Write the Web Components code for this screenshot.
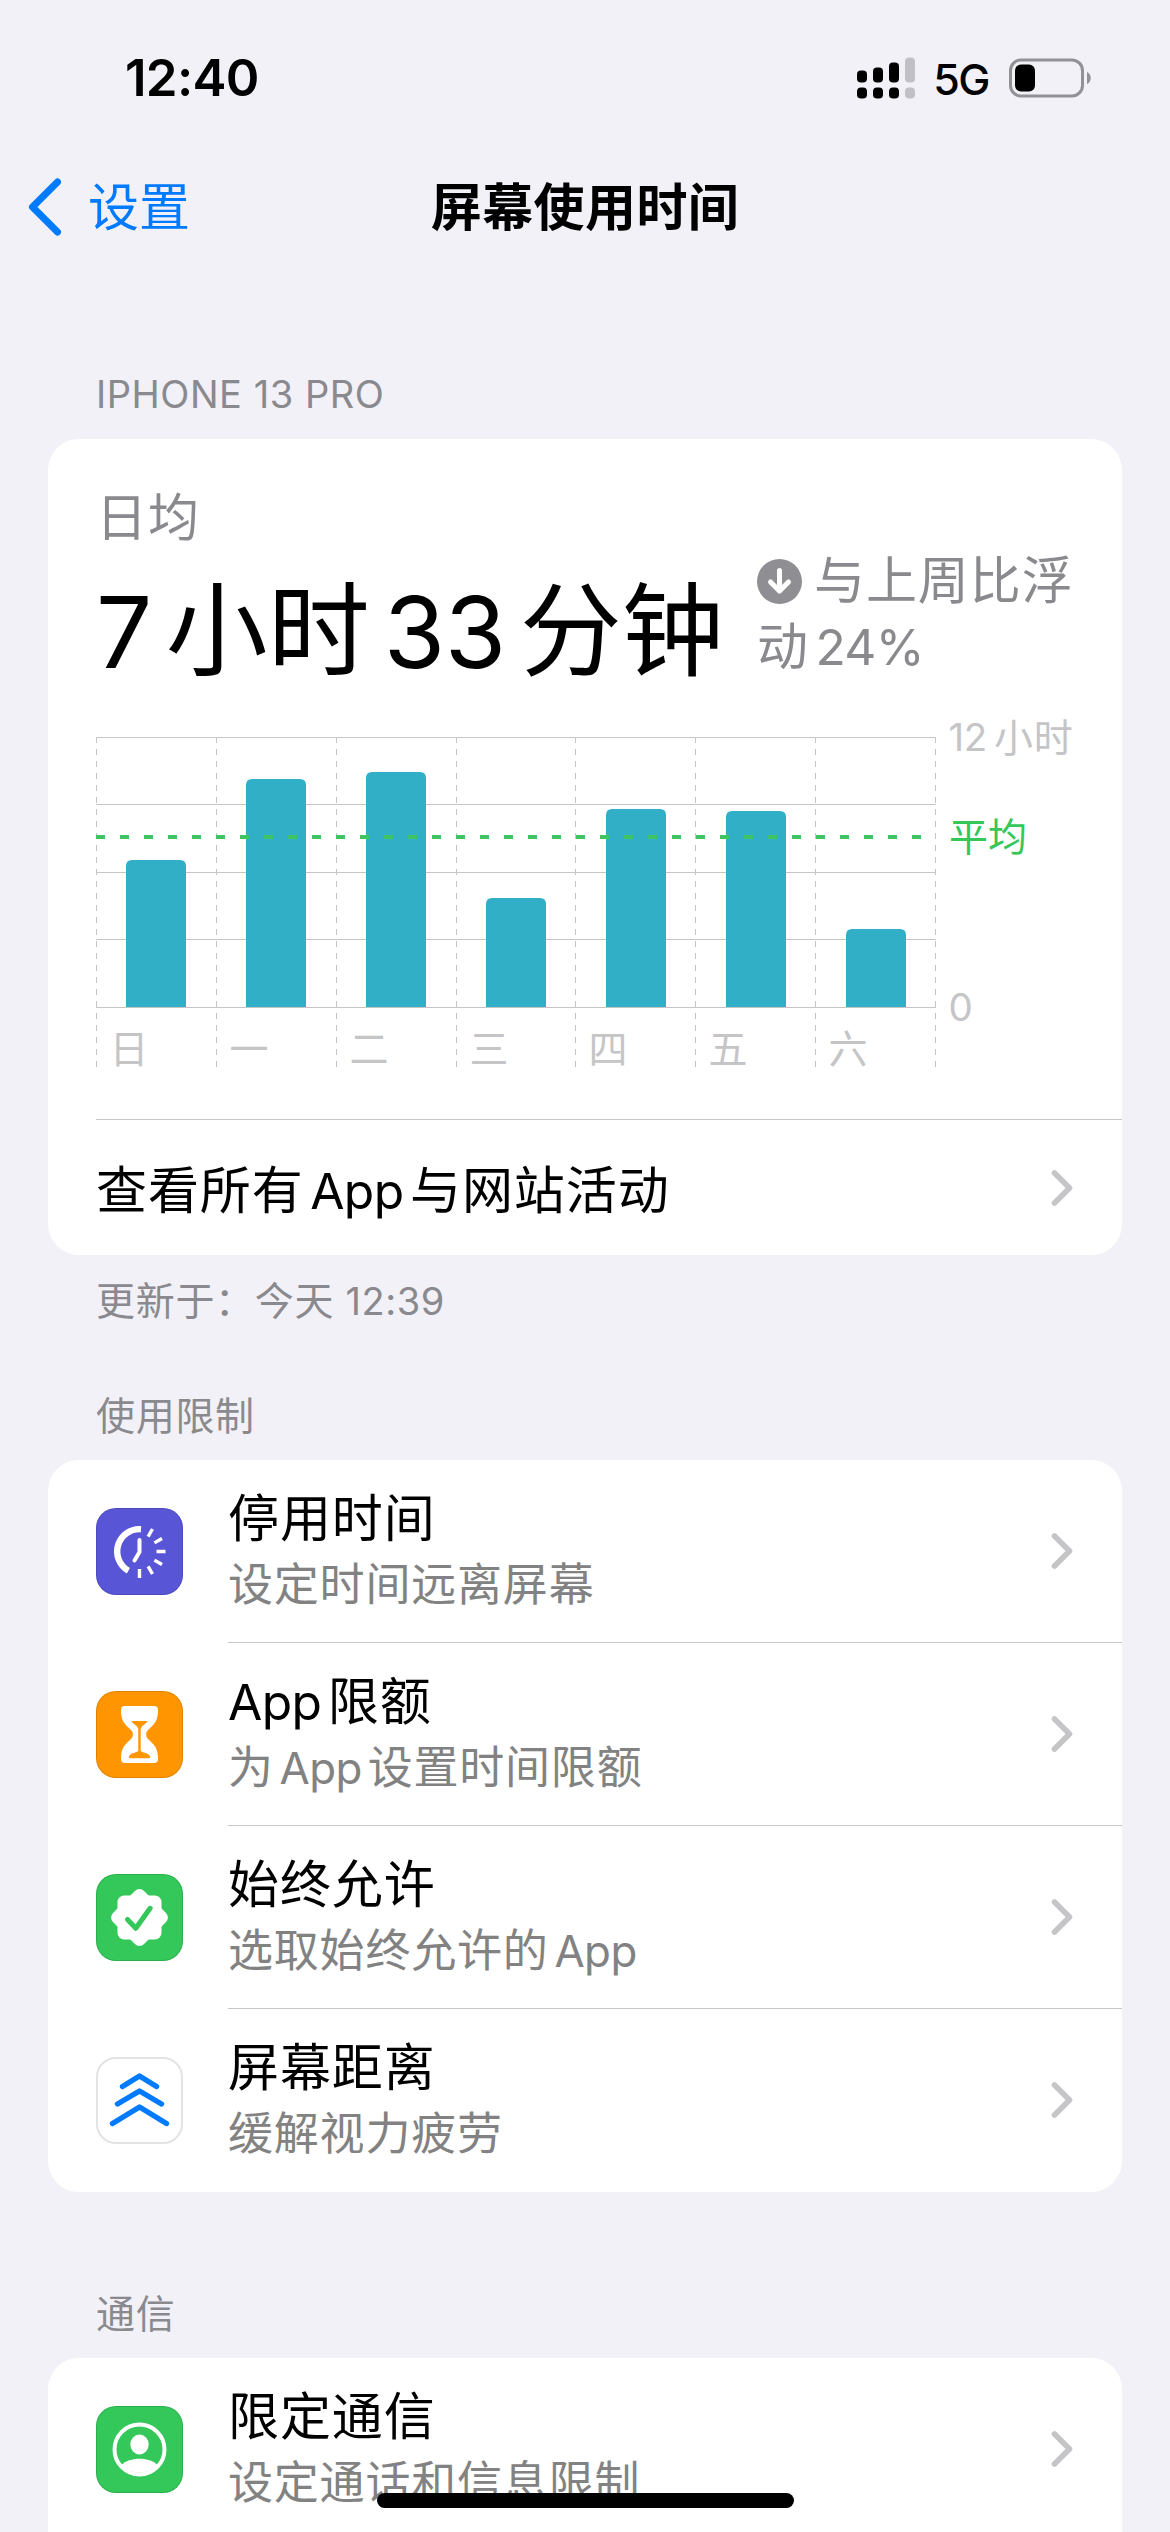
<!DOCTYPE html>
<html lang="zh-CN">
<head>
<meta charset="utf-8">
<title>屏幕使用时间</title>
<style>
html,body{margin:0;padding:0}
body{width:1170px;height:2532px;overflow:hidden;background:#f2f1f8;font-family:Inter,"Noto Sans CJK SC",sans-serif;color:#000}
</style>
</head>
<body>
<screen-time-page></screen-time-page>
<script>
const define = (name, html, setup) => {
  const t = document.createElement('template');
  t.innerHTML = html;
  customElements.define(name, class extends HTMLElement {
    connectedCallback() {
      if (this.shadowRoot) return;
      this.attachShadow({mode: 'open'}).append(t.content.cloneNode(true));
      if (setup) setup(this, this.shadowRoot);
    }
  });
};

/* Text that mixes Chinese and Latin runs, with a thin gap where they meet. */
define('mixed-text', `<style>
:host{display:block;white-space:nowrap;text-autospace:no-autospace;letter-spacing:var(--cjk,.018em)}
.l{font-size:.975em;letter-spacing:var(--latin,-.012em)}
.b{margin-left:var(--gap,.13em)}.a{margin-right:var(--gap,.13em)}
</style><span id="t"></span>`, (el, root) => {
  const box = root.getElementById('t');
  const runs = el.getAttribute('text').match(/[\x20-\x7e]+|[^\x20-\x7e]+/g);
  runs.forEach((r, i) => {
    const s = document.createElement('span');
    s.textContent = r;
    if (/[\x21-\x7e]/.test(r)) {
      s.className = 'l' + (i && r[0] !== ' ' ? ' b' : '') + (i < runs.length - 1 ? ' a' : '');
    }
    box.append(s);
  });
});

define('status-bar', `<style>
:host{display:flex;height:155px;align-items:center;padding:0 78px 0 125px;box-sizing:border-box}
.time{font-size:51px;font-weight:600;line-height:60px;letter-spacing:-.7px;flex:1}
.net{font-size:43px;font-weight:500;line-height:60px;letter-spacing:-1.500px;margin:2px 20px 0 18px}
svg{display:block}
</style>
<span class="time">12:40</span>
<svg width="58" height="42" viewBox="0 0 58 42"><g><rect y="13.500" width="10" height="12" rx="4"/><rect x="16" y="10.500" width="10" height="15" rx="4"/><rect x="32" y="5.500" width="10" height="20" rx="4"/><rect y="30.500" width="10" height="11" rx="4"/><rect x="16" y="30.500" width="10" height="11" rx="4"/><rect x="32" y="30.500" width="10" height="11" rx="4"/></g><g fill="#c1c0c6"><rect x="48" y=".5" width="10" height="25" rx="4"/><rect x="48" y="30.500" width="10" height="11" rx="4"/></g></svg>
<span class="net">5G</span>
<svg width="83" height="40" viewBox="0 0 83 40"><rect x="1.500" y="2" width="72" height="36" rx="10.500" fill="none" stroke="#929196" stroke-width="3"/><rect x="6" y="6.500" width="20" height="27" rx="6"/><path d="M78 14c5 2 5 10 0 12z" fill="#929196"/></svg>`);

define('nav-bar', `<style>
:host{display:grid;grid-template-columns:1fr auto 1fr;align-items:center;height:104px;padding:0 28px;font-size:51px;line-height:70px}
.back{display:flex;align-items:center;gap:26px;color:#007aff;--cjk:0}
.title{font-weight:600;--cjk:.008em}
mixed-text{padding-top:2px}
svg{display:block}
</style>
<div class="back"><svg width="34" height="58" viewBox="0 0 34 58"><path d="M29.500 4 4.500 29l25 25" fill="none" stroke="currentColor" stroke-width="7" stroke-linecap="round" stroke-linejoin="round"/></svg><mixed-text text="设置"></mixed-text></div>
<mixed-text class="title" text="屏幕使用时间"></mixed-text><span></span>`);

define('section-note', `<style>:host{display:block;padding:0 96px;font-size:39px;line-height:50px;color:#8a8a8e;--latin:.014em}</style><slot></slot>`);

define('group-card', `<style>:host{display:block;margin:0 48px;background:#fff;border-radius:31px;overflow:hidden}:host([continues]){border-radius:31px 31px 0 0}</style><slot></slot>`);

define('row-chevron', `<style>:host{display:block;flex:none}svg{display:block}</style>
<svg width="22" height="38" viewBox="0 0 22 38"><path d="M3.500 4 18.500 19l-15 15" fill="none" stroke="#c5c5c7" stroke-width="5.600" stroke-linecap="round" stroke-linejoin="round"/></svg>`);

const icons = {
  downtime: ['#5856d6', `<g fill="none" stroke="#fff"><path d="M45 21.200A22.300 22.300 0 0 0 32.400 62.800" stroke-width="6.400"/><path d="M43.500 32v12l-5 8.500" stroke-width="4" stroke-linecap="round" stroke-linejoin="round"/><path d="M60.500 43.500h9M58.400 52.100l7.600 4.400M52.100 58.400l4.400 7.600M43.500 61v9M58.400 34.900l7.600-4.400M52.100 28.600l4.400-7.600" stroke-width="3.400"/></g>`],
  limits: ['#ff9500', `<path fill="#fff" d="M29 15h29a4 4 0 0 1 4 4c0 12-4 14-10 20q-4 4 0 9c6 6 10 8 10 20a4 4 0 0 1-4 4H29a4 4 0 0 1-4-4c0-12 4-14 10-20q4-5 0-9c-6-6-10-8-10-20a4 4 0 0 1 4-4z"/><path fill="#ff9500" d="M35.500 30h16c-1 3-6 4-6.800 8v22c2 2 9 2 9.500 6q0 1.300-1.500 1.300H34.300q-1.500 0-1.500-1.300c.5-4 7.500-4 9.500-6V38c-.8-4-5.800-5-6.800-8z"/>`],
  allowed: ['#34c759', `<g fill="#fff"><rect x="21.500" y="21.500" width="44" height="44" rx="6.500"/><rect x="21.500" y="21.500" width="44" height="44" rx="6.500" transform="rotate(45 43.500 43.500)"/></g><path d="M31.500 45.500l8.300 8.800 14.300-20" fill="none" stroke="#34c759" stroke-width="5" stroke-linecap="round" stroke-linejoin="round"/>`],
  distance: ['#fff', `<path d="M26.500 29.500l17-10.500 17 10.500M21.500 47l22-13 22 13M16.500 66.500l27-16.500 27 16.500" fill="none" stroke="#007aff" stroke-width="5.400" stroke-linecap="round" stroke-linejoin="round"/>`],
  contact: ['#34c759', `<circle cx="43.500" cy="43.500" r="25" fill="none" stroke="#fff" stroke-width="4"/><ellipse cx="43.500" cy="38.500" rx="9.200" ry="10" fill="#fff"/><path fill="#fff" d="M25.500 59C33 50.500 54 50.500 61.500 59A25 25 0 0 1 25.500 59z"/>`]
};

define('app-icon', `<style>
:host{display:block;flex:none;width:87px;height:87px}svg{display:block}
</style><svg width="87" height="87" viewBox="0 0 87 87"></svg>`, (el, root) => {
  const [bg, art] = icons[el.getAttribute('name')];
  const edge = bg === '#fff' ? 'stroke="#e3e3e5" stroke-width="2"' : 'stroke="#000" stroke-opacity=".12"';
  const o = bg === '#fff' ? 1 : .5;
  root.querySelector('svg').innerHTML = `<rect width="87" height="87" rx="20" fill="${bg}"/>${art}<rect x="${o}" y="${o}" width="${87 - 2 * o}" height="${87 - 2 * o}" rx="${20 - o}" fill="none" ${edge}/>`;
});

define('setting-row', `<style>
:host{display:flex;height:183px;padding-left:48px;gap:45px;align-items:center;box-sizing:border-box}
.main{flex:1;height:183px;display:flex;align-items:center;padding-right:49px;border-bottom:1px solid #c6c6c8;box-sizing:border-box}
:host([last]) .main{border-bottom-color:transparent}
.txt{flex:1;height:183px;padding-top:25px;box-sizing:border-box}
.t{font-size:51px;line-height:68px}
.s{font-size:45px;line-height:64px;color:#828282}
</style><div class="main"><div class="txt"></div><row-chevron></row-chevron></div>`, (el, root) => {
  const make = (tag, attr, val, cls) => {
    const n = document.createElement(tag);
    n.setAttribute(attr, val);
    if (cls) n.className = cls;
    return n;
  };
  root.querySelector('.main').before(make('app-icon', 'name', el.getAttribute('icon')));
  root.querySelector('.txt').append(
    make('mixed-text', 'text', el.getAttribute('label'), 't'),
    make('mixed-text', 'text', el.getAttribute('detail'), 's'));
});

define('usage-summary', `<style>
:host{display:block;padding:49px 48px 0}
.cap{font-size:51px;line-height:60px;color:#8a8a8e}
.row{display:flex;height:147px}
.big{font-size:102px;line-height:132px;padding-top:17px;width:661px;height:130px;--latin:-.004em;--gap:.14em;--cjk:0}
.cmp{color:#8a8a8e;font-size:51px;line-height:66px}
.cmp div{display:flex;align-items:center;gap:12px;height:66px}
svg{display:block}
</style>
<mixed-text class="cap" text="日均"></mixed-text>
<div class="row"><mixed-text class="big" text="7小时33分钟"></mixed-text>
<div class="cmp"><div><svg width="45" height="45" viewBox="0 0 45 45"><circle cx="22.500" cy="22.500" r="22.500" fill="#8e8e93"/><path d="M22.500 11.500v20.500M13.500 23l9 9 9-9" fill="none" stroke="#fff" stroke-width="5" stroke-linecap="round" stroke-linejoin="round"/></svg><mixed-text text="与上周比浮"></mixed-text></div><div><mixed-text text="动24%"></mixed-text></div></div></div>`);

define('usage-chart', `<style>
:host{display:block}svg{display:block;font-size:39px;fill:#c5c5c7}
</style><svg width="1074" height="424" viewBox="-48 -42 1074 424"></svg>`, (el, root) => {
  const days = [['日', 147], ['一', 228], ['二', 235], ['三', 109], ['四', 198], ['五', 196], ['六', 78]];
  const cols = [0, 120, 240, 360, 479, 599, 719, 839];
  let s = '<g stroke="#c5c5c7">';
  for (const y of [0, 67, 135, 202, 270]) s += `<path d="M0 ${y + .5}H840"/>`;
  for (const x of cols) s += `<path d="M${x + .5} 0V330" stroke-dasharray="6"/>`;
  s += '</g>';
  days.forEach(([d, h], i) => {
    const x = 30 + i * 120;
    s += `<path fill="#30afc7" d="M${x} 270V${276 - h}q0-6 6-6h48q6 0 6 6V270z"/><text x="${cols[i] + 13.5}" y="325.500">${d}</text>`;
  });
  s += `<path d="M0 100H830" stroke="#3fc463" stroke-width="4" stroke-dasharray="9 15"/>
  <text x="852.500" y="14" font-size="38.500" letter-spacing="-.5">12</text><text x="898" y="14.500" letter-spacing=".7">小时</text>
  <text x="853" y="113.500" fill="#34c759">平均</text><text x="852.500" y="284" font-size="38.500">0</text>`;
  root.querySelector('svg').innerHTML = s;
});

define('link-row', `<style>
:host{display:flex;align-items:center;height:136px;box-sizing:border-box;margin-left:48px;padding-right:49px;border-top:1px solid #c6c6c8;font-size:51px;line-height:70px}
.w{flex:1;padding-top:7px}
</style><div class="w"><slot></slot></div><row-chevron></row-chevron>`);

define('home-indicator', `<style>:host{position:absolute;left:377px;top:2493px;width:417px;height:15px;border-radius:8px;background:#000}</style>`);

define('screen-time-page', `<style>
:host{display:block;position:relative;width:1170px;height:2532px;overflow:hidden}
.h1{margin:110px 0 20px}.f1{margin-top:21px}.h2{margin:65px 0 19px}.h3{margin:97px 0 19px}
</style>
<status-bar></status-bar><nav-bar></nav-bar>
<section-note class="h1"><mixed-text text="IPHONE 13 PRO"></mixed-text></section-note>
<group-card><usage-summary></usage-summary><usage-chart></usage-chart><link-row><mixed-text text="查看所有App与网站活动"></mixed-text></link-row></group-card>
<section-note class="f1"><mixed-text text="更新于：今天 12:39"></mixed-text></section-note>
<section-note class="h2"><mixed-text text="使用限制"></mixed-text></section-note>
<group-card>
<setting-row icon="downtime" label="停用时间" detail="设定时间远离屏幕"></setting-row>
<setting-row icon="limits" label="App限额" detail="为App设置时间限额"></setting-row>
<setting-row icon="allowed" label="始终允许" detail="选取始终允许的App"></setting-row>
<setting-row last icon="distance" label="屏幕距离" detail="缓解视力疲劳"></setting-row>
</group-card>
<section-note class="h3"><mixed-text text="通信"></mixed-text></section-note>
<group-card continues><setting-row icon="contact" label="限定通信" detail="设定通话和信息限制"></setting-row></group-card>
<home-indicator></home-indicator>`);
</script>
</body>
</html>
